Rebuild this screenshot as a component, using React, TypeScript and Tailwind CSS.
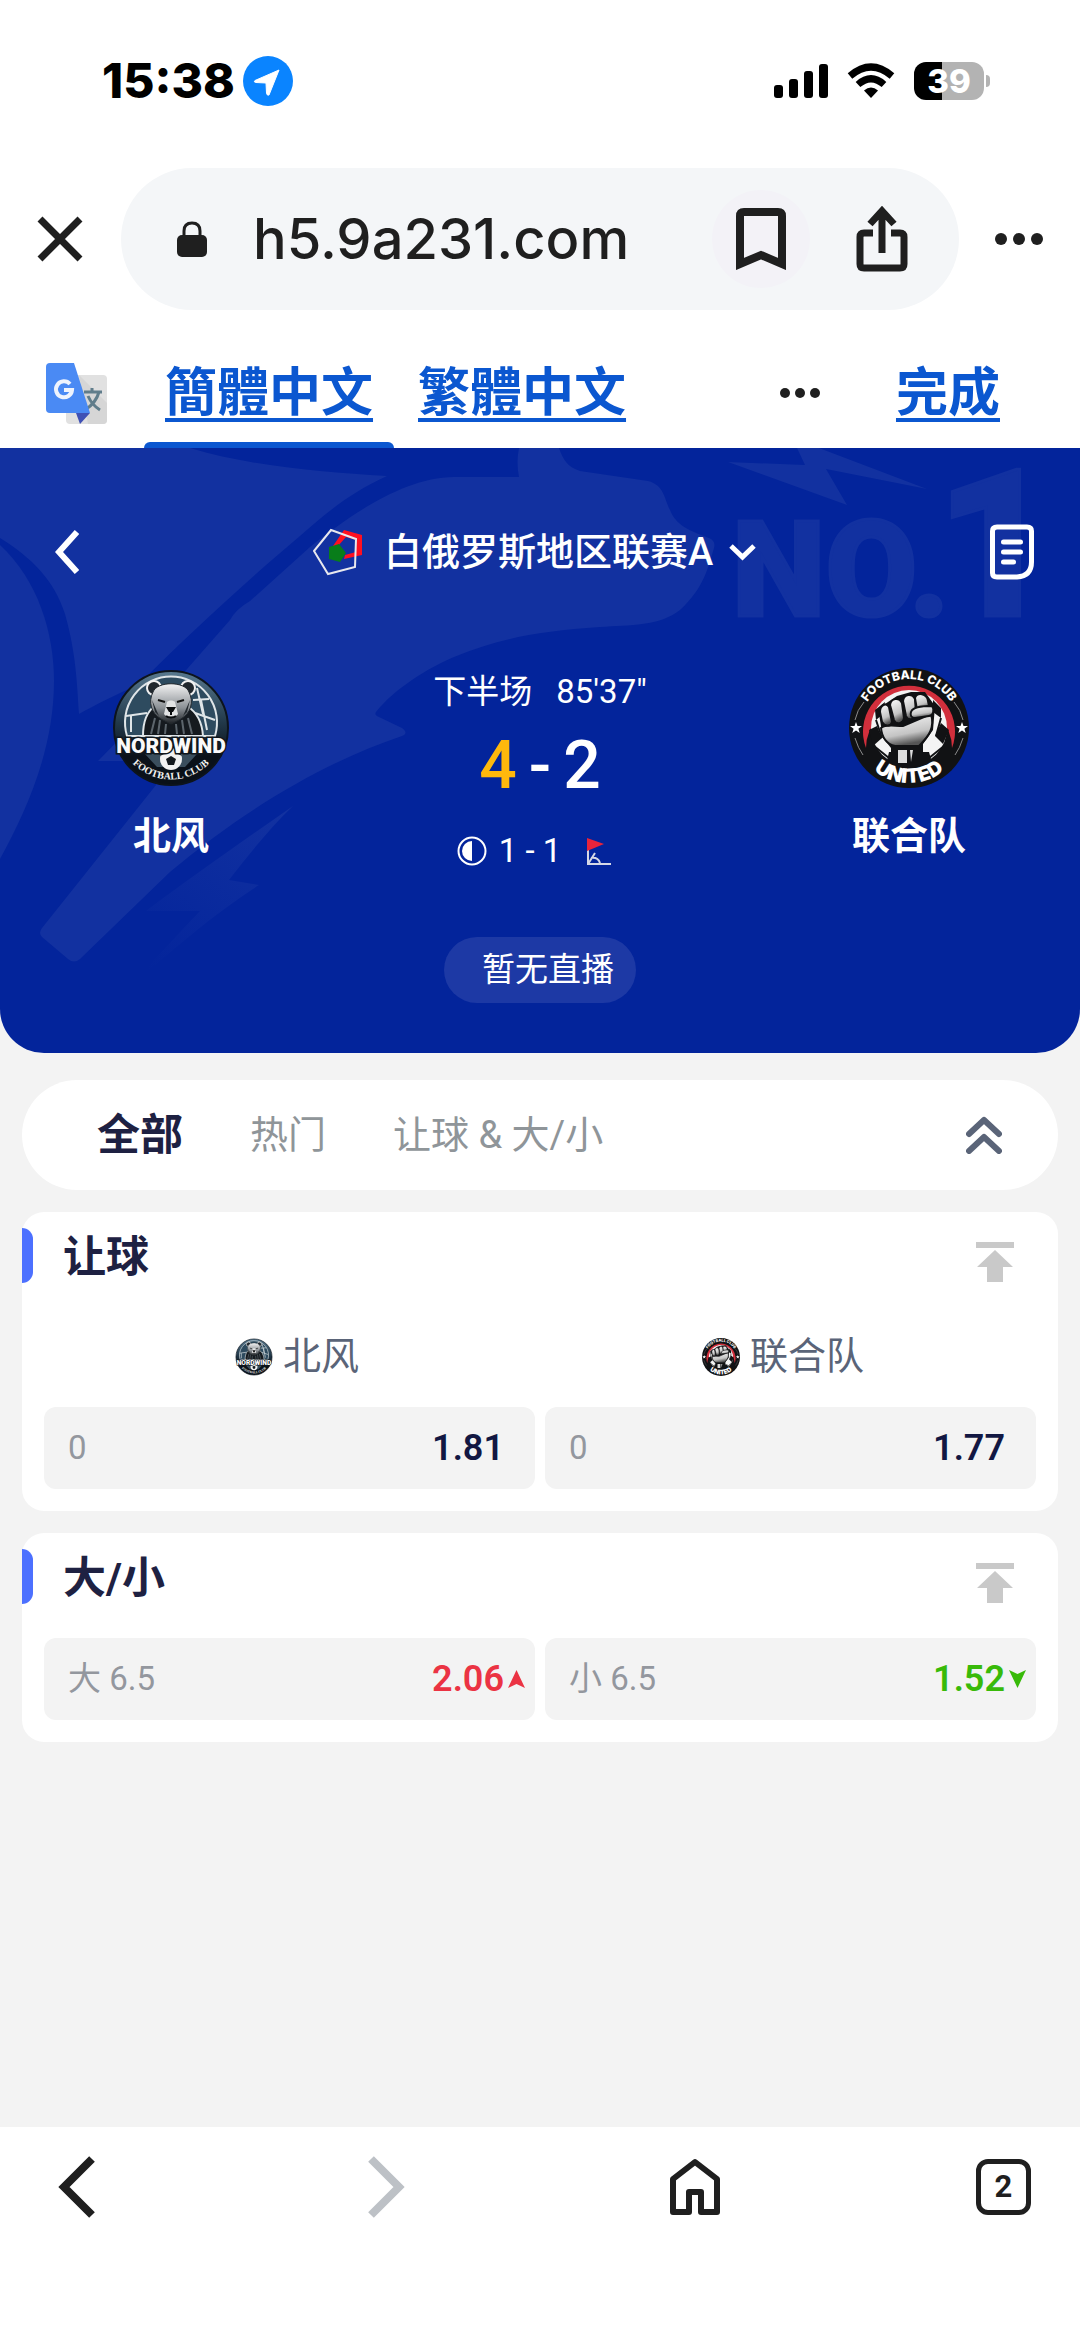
import { useId } from 'react'
import type { ReactNode } from 'react'

type Trend = 'up' | 'down'

interface Odd {
  label: string
  price: string
  trend?: Trend
}

interface BadgeProps {
  className?: string
}

const tabs = ['全部', '热门', '让球 & 大/小']

const handicap: Odd[] = [
  { label: '0', price: '1.81' },
  { label: '0', price: '1.77' },
]

const totals: Odd[] = [
  { label: '大 6.5', price: '2.06', trend: 'up' },
  { label: '小 6.5', price: '1.52', trend: 'down' },
]

function NordwindBadge({ className }: BadgeProps) {
  const id = useId()
  return (
    <svg viewBox="0 0 120 120" className={className} role="img" aria-label="Nordwind">
      <defs>
        <linearGradient id={`${id}-bg`} x1="0" y1="0" x2="0" y2="1">
          <stop offset="0" stopColor="#58798f" />
          <stop offset="0.45" stopColor="#22394a" />
          <stop offset="0.75" stopColor="#0a1119" />
        </linearGradient>
        <linearGradient id={`${id}-fur`} x1="0" y1="0" x2="0" y2="1">
          <stop offset="0" stopColor="#f4f4f4" />
          <stop offset="0.6" stopColor="#8b9095" />
          <stop offset="1" stopColor="#1c2024" />
        </linearGradient>
        <path id={`${id}-arc`} d="M8 72 A54 54 0 0 0 112 72" />
      </defs>
      <circle cx="60" cy="60" r="57" fill={`url(#${id}-bg)`} stroke="#0d141c" strokeWidth="2" />
      <path d="M16 68 A46 46 0 1 1 104 68 Z" fill="#2e4b5f" stroke="#dfe5e8" strokeWidth="2" />
      <g stroke="#dfe5e8" strokeWidth="2" fill="none">
        <path d="M15 48 L36 45 M20 48 V64 M82 32 L98 31 M84 45 L104 52 M90 32 L96 62 M86 20 L92 46" />
      </g>
      {/* bear */}
      <path d="M32 68 C32 50 38 42 44 38 H76 C84 43 91 52 92 68 Z" fill="#151a1f" stroke="#dfe5e8" strokeWidth="2" />
      <path d="M40 66 L44 50 M47 66 L49 52 M54 66 L55 56 M66 66 L65 56 M73 66 L71 52 M81 66 L77 50" stroke="#5c656c" strokeWidth="2" />
      <circle cx="43" cy="20" r="7" fill="#20272d" stroke="#f1f1f1" strokeWidth="2" />
      <circle cx="77" cy="20" r="7" fill="#20272d" stroke="#f1f1f1" strokeWidth="2" />
      <path d="M42 24 C46 13 74 13 78 24 C83 34 80 45 70 51 L60 56 L50 51 C40 45 37 34 42 24 Z" fill={`url(#${id}-fur)`} stroke="#23292e" />
      <path d="M41 32 L48 48 L44 44 Z M79 32 L72 48 L76 44 Z" fill="#23292e" />
      <path d="M47 32 L54 34 M73 32 L66 34" stroke="#111" strokeWidth="2" />
      <path d="M56 34 C58 32 62 32 64 34 L67 46 C65 50 55 50 53 46 Z" fill="#e2e3e4" />
      <path d="M55 39 H65 L62 44 H58 Z" fill="#0b0d0f" />
      <path d="M60 43 V47 M55 48 C57 50 63 50 65 48" stroke="#0b0d0f" strokeWidth="2" fill="none" />
      {/* ball */}
      <path d="M34 86 H86 L74 99 H46 Z" fill="#3a4e5d" />
      <circle cx="60" cy="91" r="11" fill="#f2f2f2" />
      <path d="M55 91 L60 88 L65 91 L63 97 H57 Z M49 88 L53 86 V82 M71 88 L67 86 V82" fill="#14191e" />
      <text
        x="60"
        y="85"
        textAnchor="middle"
        fontFamily="Roboto, sans-serif"
        fontWeight="900"
        fontSize="21"
        fill="#fafafa"
        stroke="#10161c"
        strokeWidth="3"
        paintOrder="stroke"
      >
        NORDWIND
      </text>
      <text fontFamily="'Liberation Serif', serif" fontWeight="700" fontSize="10" fill="#f1f1f1" textAnchor="middle">
        <textPath href={`#${id}-arc`} startOffset="50%">FOOTBALL CLUB</textPath>
      </text>
    </svg>
  )
}

function UnitedBadge({ className }: BadgeProps) {
  const id = useId()
  const star = 'M0 -6 L1.5 -2 L6 -2 L2.4 0.8 L3.7 5 L0 2.5 L-3.7 5 L-2.4 0.8 L-6 -2 L-1.5 -2 Z'
  return (
    <svg viewBox="0 0 120 120" className={className} role="img" aria-label="United">
      <defs>
        <path id={`${id}-top`} d="M11 60 A49 49 0 0 1 109 60" />
        <path id={`${id}-bottom`} d="M5 60 A55 55 0 0 0 115 60" />
        <linearGradient id={`${id}-hand`} x1="0" y1="0" x2="0.3" y2="1">
          <stop offset="0" stopColor="#ffffff" />
          <stop offset="0.7" stopColor="#c4c4c4" />
          <stop offset="1" stopColor="#555555" />
        </linearGradient>
      </defs>
      <circle cx="60" cy="60" r="60" fill="#111214" />
      <path d="M17 80 A46 46 0 1 1 103 80 A43 43 0 1 0 17 80 Z" fill="#d22f3c" />
      {/* ball behind the fist */}
      <circle cx="60" cy="60" r="38" fill="#f4f4f4" />
      <path d="M20 62 L28 58 L33 70 L24 78 Z M100 62 L92 55 L86 68 L94 76 Z M26 42 L36 34 L34 46 L27 52 Z M92 40 L84 32 L84 44 L92 50 Z M36 101 L40 84 H80 L84 98 L60 104 Z" fill="#111214" />
      <path d="M25 78 L40 90 M95 78 L80 90 M27 52 L33 70 M92 50 L87 68" stroke="#111214" strokeWidth="2" />
      <path d="M42 98 V80 L34 70 L30 46 L36 36 L48 28 L62 24 L76 24 L86 38 L84 62 L74 76 V98 Z" fill="#111214" />
      {/* fist */}
      <g fill={`url(#${id}-hand)`} stroke="#111214" strokeWidth="2">
        <path d="M32 60 C36 56 44 58 54 58 L82 46 C86 60 80 68 70 78 H46 C38 76 33 70 32 60 Z" />
        <path d="M31 44 C31 37 37 34 40 39 L43 54 C42 59 35 58 33 54 Z" />
        <path d="M41 37 C42 30 50 29 53 35 L55 50 C54 56 47 57 45 52 Z" />
        <path d="M54 33 C55 26 63 25 66 31 L67 46 C66 52 59 53 57 48 Z" />
        <path d="M66 30 C68 24 78 25 79 33 L80 38 L68 42 Z" />
        <path d="M62 44 C64 38 76 38 83 38 C86 42 84 48 80 48 L66 50 C62 50 61 47 62 44 Z" />
      </g>
      <path d="M49 82 H58 V95 H49 Z M61 82 H64 L62 94 Z" fill="#dcdcdc" />
      <path d="M15 34 Q8 42 6 52 M105 34 Q112 42 114 52 M6 70 Q9 80 14 87 M114 70 Q111 80 106 87" fill="none" stroke="#8b8b8b" />
      <path transform="translate(7 60)" d={star} fill="#fff" />
      <path transform="translate(113 60)" d={star} fill="#fff" />
      <text fontFamily="Inter, sans-serif" fontWeight="800" fontSize="12" fill="#fff" textAnchor="middle">
        <textPath href={`#${id}-top`} startOffset="50%">FOOTBALL CLUB</textPath>
      </text>
      <text fontFamily="Inter, sans-serif" fontWeight="900" fontSize="20" fill="#fff" textAnchor="middle">
        <textPath href={`#${id}-bottom`} startOffset="50%">UNITED</textPath>
      </text>
    </svg>
  )
}

function Dots({ className }: { className: string }) {
  return (
    <svg viewBox="0 0 48 12" className={className} fill="#1f1f1f">
      <circle cx="6" cy="6" r="6" />
      <circle cx="24" cy="6" r="6" />
      <circle cx="42" cy="6" r="6" />
    </svg>
  )
}

function StatusBar() {
  return (
    <div className="flex items-center justify-between h-[50px] mt-14 pl-[102px] pr-[90px]">
      <div className="flex items-center gap-2">
        <span className="text-[48px] leading-[50px] font-extrabold text-black">15:38</span>
        <svg viewBox="0 0 50 50" className="w-[50px] h-[50px]">
          <circle cx="25" cy="25" r="25" fill="#0a84ff" />
          <path d="M36 14 L26 39 Q24 40 23.500 37 L23 27 L13 26.500 Q10 26 12 24.500 Z" fill="#fff" stroke="#fff" strokeWidth="1" strokeLinejoin="round" />
        </svg>
      </div>
      <div className="flex items-center gap-[19px]">
        <svg viewBox="0 0 54 36" className="w-[54px] h-9" fill="#000">
          <rect x="0" y="22" width="9" height="13" rx="3" />
          <rect x="15" y="16" width="9" height="19" rx="3" />
          <rect x="30" y="8" width="9" height="27" rx="3" />
          <rect x="45" y="1" width="9" height="34" rx="3" />
        </svg>
        <svg viewBox="0 0 48 36" className="w-12 h-9" fill="none" stroke="#000" strokeWidth="7">
          <path d="M3 13 Q24 -5 45 13" />
          <path d="M11 21.500 Q24 10 37 21.500" />
          <path d="M17 27.500 Q24 21.500 31 27.500 L24 35 Z" fill="#000" stroke="none" />
        </svg>
        <div className="flex items-center gap-[2px]">
          <span className="w-[70px] h-[38px] rounded-xl bg-[linear-gradient(to_right,#000_40%,#b3b3b3_40%)] text-center text-[33px] leading-[38px] font-extrabold text-white">39</span>
          <span className="w-1 h-3 rounded-r-full bg-[#b3b3b3]" />
        </div>
      </div>
    </div>
  )
}

function AddressBar() {
  return (
    <div className="flex items-center mt-[62px] px-[37px]">
      <button aria-label="关闭">
        <svg viewBox="0 0 46 46" className="w-[46px] h-[46px]" stroke="#1f1f1f" strokeWidth="7">
          <path d="M3 3 L43 43 M43 3 L3 43" />
        </svg>
      </button>
      <div className="flex flex-1 items-center min-w-0 h-[142px] ml-[38px] mr-9 pl-14 pr-[51px] rounded-full bg-[#f4f6f8]">
        <svg viewBox="0 0 30 37" className="w-[30px] h-[37px] shrink-0">
          <path d="M7 17 V10 Q7 2 15 2 Q23 2 23 10 V17" fill="none" stroke="#1f1f1f" strokeWidth="3" />
          <rect x="0" y="14" width="30" height="22" rx="5" fill="#1f1f1f" />
        </svg>
        <input
          aria-label="网址"
          readOnly
          value="h5.9a231.com"
          className="flex-1 min-w-0 ml-[46px] bg-transparent text-[56px] leading-[72px] font-medium text-[#1f1f1f] outline-none"
        />
        <button aria-label="书签" className="flex items-center justify-center shrink-0 size-[98px] rounded-full bg-[#f3f2f7]">
          <svg viewBox="0 0 50 62" className="w-[50px] h-[62px]" fill="none" stroke="#1f1f1f" strokeWidth="8">
            <path d="M4 56 V8 Q4 4 8 4 H42 Q46 4 46 8 V56 L25 47 Z" />
          </svg>
        </button>
        <button aria-label="分享" className="shrink-0 ml-[46px]">
          <svg viewBox="0 0 52 68" className="w-[52px] h-[68px]" fill="none" stroke="#1f1f1f" strokeWidth="7">
            <path d="M17 28 H8 Q4 28 4 32 V59 Q4 63 8 63 H44 Q48 63 48 59 V32 Q48 28 44 28 H35" />
            <path d="M26 48 V8 M14 19 L26 6 L38 19" />
          </svg>
        </button>
      </div>
      <button aria-label="更多">
        <Dots className="w-12 h-3" />
      </button>
    </div>
  )
}

function TranslateBar() {
  const link = 'underline decoration-4 underline-offset-[7px]'
  return (
    <div className="flex items-start h-[138px] pl-[46px] pr-20 font-['Noto_Sans_CJK_TC',sans-serif] text-[52px] leading-[52px] font-bold text-[#0b57d0]">
      <svg viewBox="0 0 61 61" className="w-[61px] h-[61px] mt-[53px]">
        <rect x="20" y="12" width="41" height="49" rx="4" fill="#e1e1e1" />
        <path d="M33 12 L61 40 V57 Q61 61 57 61 H42 Z" fill="#d6d6d6" />
        <path d="M38 29 H56 M46 25 V29 M53 29 Q50 40 39 47 M42 33 Q46 42 54 47" stroke="#607d8b" strokeWidth="3" fill="none" />
        <path d="M30 50 H44 L34 61 Z" fill="#3f51b5" />
        <path d="M4 0 H28 L44 50 H4 Q0 50 0 46 V4 Q0 0 4 0 Z" fill="#4a8af4" />
        <path d="M24 21 A8 8 0 1 0 26 27 H18" stroke="#eef3fd" strokeWidth="4" fill="none" />
      </svg>
      <div className="flex gap-[3px] h-full ml-[37px]">
        <button className="relative flex items-start pt-[53px] px-[21px]">
          <span className={link}>簡體中文</span>
          <span className="absolute inset-x-0 bottom-0 h-[6px] rounded-t-md bg-[#0b57d0]" />
        </button>
        <button className="flex items-start pt-[53px] px-[21px]">
          <span className={link}>繁體中文</span>
        </button>
      </div>
      <button aria-label="翻译选项" className="mt-[78px] ml-auto">
        <Dots className="w-10 h-[10px]" />
      </button>
      <button className={`mt-[53px] ml-[76px] ${link}`}>完成</button>
    </div>
  )
}

function HeroBackdrop() {
  const id = useId()
  return (
    <svg viewBox="0 0 1080 605" preserveAspectRatio="xMidYMin slice" className="absolute inset-0 w-full h-full" fill="#1231a0" aria-hidden="true">
      <defs>
        <linearGradient id={id} x1="0.9" y1="0" x2="0.2" y2="1">
          <stop offset="0" stopColor="#1231a0" />
          <stop offset="1" stopColor="#1231a0" stopOpacity="0" />
        </linearGradient>
      </defs>
      <path d="M0 0 H190 C250 18 320 24 387 28 C350 45 330 62 300 88 C250 130 190 185 138 237 C115 247 97 256 79 266 C77 235 76 205 65 166 C54 132 32 110 0 90 Z" />
      <path d="M0 97 C38 132 54 185 54 233 C54 300 28 360 0 411 Z" />
      <path d="M519 0 H559 C563 12 568 19 580 23 L648 33 C664 37 664 50 670 62 C677 80 695 84 709 90 Q716 93 714 100 C708 120 704 140 680 162 C660 178 630 177 600 179 C540 183 500 190 454 209 C430 219 395 240 376 264 Q374 267 379 269 L402 280 Q409 285 402 288 C330 312 250 357 170 424 L80 511 Q74 516 68 511 L42 489 Q38 485 42 480 L156 337 L150 313 H98 L180 229 L230 172 Q236 161 250 153 L310 99 C350 67 405 29 454 29 H519 Q516 14 519 0 Z" />
      <path d="M293 358 C270 380 250 405 229 432 L259 437 C215 465 175 500 133 536 C155 510 178 486 200 463 H146 C190 430 240 395 293 358 Z" fill={`url(#${id})`} />
      <path d="M797 0 L805 17 L728 14 L847 57 L826 21 L927 41 L819 0 Z" />
      <text x="732" y="168" fontFamily="Roboto, sans-serif" fontWeight="900" fontSize="133" stroke="#1231a0" strokeWidth="3">
        NO.<tspan dx="-14" fontSize="206">1</tspan>
      </text>
    </svg>
  )
}

function Team({ name, badge }: { name: string, badge: ReactNode }) {
  return (
    <div className="flex flex-col items-center">
      {badge}
      <p className="mt-6 text-[38px] leading-[48px] font-bold">{name}</p>
    </div>
  )
}

function MatchHeader() {
  return (
    <section className="relative overflow-hidden rounded-b-[44px] bg-[#03249b] text-white">
      <HeroBackdrop />
      <div className="relative">
        <div className="flex items-center justify-between h-[134px] pt-[74px] pl-[55px] pr-[46px]">
          <button aria-label="返回">
            <svg viewBox="0 0 24 44" className="w-6 h-11" fill="none" stroke="#fff" strokeWidth="6">
              <path d="M22 2 L4 22 L22 42" />
            </svg>
          </button>
          <button className="flex items-center text-[38px] leading-[48px] font-medium">
            <svg viewBox="0 0 50 48" className="w-[50px] h-12 mr-[21px]">
              <path d="M20 18 L31 2 L49 7 V27 L31 31 L32 27 L43 24 V12 L33 9 L25 18 Z" fill="#ff1020" />
              <path d="M16 19 L26 16 L33 25 L27 34 L16 31 Z" fill="#087d1a" />
              <path d="M1 23 L18 2 L43 11 L42 39 L15 46 Z" fill="none" stroke="#e8e8ee" strokeWidth="2" />
            </svg>
            白俄罗斯地区联赛A
            <svg viewBox="0 0 27 18" className="w-[27px] h-[18px] ml-4" fill="none" stroke="#fff" strokeWidth="5">
              <path d="M2 3 L13.500 14 L25 3" />
            </svg>
          </button>
          <button aria-label="投注记录">
            <svg viewBox="0 0 44 56" className="w-11 h-14" fill="none" stroke="#fff" strokeWidth="5" strokeLinecap="round">
              <path d="M7 3 H37 Q41.500 3 41.500 7 V38 Q41.500 52 27 53 H7 Q2.500 53 2.500 49 V7 Q2.500 3 7 3 Z" />
              <path d="M13.500 18 H30.500 M13.500 28 H30.500 M13.500 38 H23.500" />
            </svg>
          </button>
        </div>

        <div className="grid grid-cols-[19fr_22fr_19fr] pt-[86px]">
          <Team name="北风" badge={<NordwindBadge className="size-[120px]" />} />
          <div className="flex flex-col items-center">
            <p className="flex gap-6 text-[33px] leading-[48px]">
              <span>下半场</span>
              <span>85'37"</span>
            </p>
            <p className="flex gap-3 mt-[14px] text-[66px] leading-[72px] font-medium">
              <span className="text-[#ffb80c]">4</span>
              <span>-</span>
              <span>2</span>
            </p>
            <div className="flex items-center mt-[25px] pr-3 text-[33px] leading-[48px]">
              <svg viewBox="0 0 30 30" className="w-[30px] h-[30px] mr-3">
                <circle cx="15" cy="15" r="13.500" fill="none" stroke="#fff" strokeWidth="2" />
                <path d="M15 5 A10 10 0 0 0 15 25 Z" fill="#fff" />
              </svg>
              <span>1 - 1</span>
              <svg viewBox="0 0 24 28" className="w-6 h-7 ml-[26px]" fill="none" stroke="#d5d8e6" strokeWidth="2">
                <path d="M1 12 V27 H24 M1 27 L8 16 M4 21 Q11 20 13 26" />
                <path d="M0 1 L17 7 L0 14 Z" fill="#e8243b" stroke="none" />
              </svg>
            </div>
          </div>
          <Team name="联合队" badge={<UnitedBadge className="size-[120px]" />} />
        </div>

        <div className="flex justify-center pt-[62px] pb-[50px]">
          <button className="h-[66px] pl-[38px] pr-[22px] rounded-full bg-[#1d39a5] text-[33px] leading-[66px]">暂无直播</button>
        </div>
      </div>
    </section>
  )
}

function OddButton({ label, price, trend }: Odd) {
  const color = trend === 'up' ? 'text-[#eb3343]' : trend === 'down' ? 'text-[#38ba09]' : 'text-[#121742]'
  return (
    <button className="flex items-center h-[82px] pl-6 pr-[10px] rounded-xl bg-[#f3f3f3]">
      <span className="text-[33px] text-[#93979e]">{label}</span>
      <span className={`ml-auto text-[36px] font-semibold ${color}`}>{price}</span>
      <span className={`w-[17px] ml-1 ${color}`}>
        {trend && (
          <svg viewBox="0 0 17 18" className="w-[17px] h-[18px]" fill="currentColor">
            <path d={trend === 'up' ? 'M8.500 0 L17 18 L8.500 14 L0 18 Z' : 'M8.500 18 L17 0 L8.500 4 L0 0 Z'} />
          </svg>
        )}
      </span>
    </button>
  )
}

function MarketCard({ title, odds, children }: { title: string, odds: Odd[], children?: ReactNode }) {
  return (
    <section className="pt-4 pb-[22px] rounded-[22px] bg-white">
      <div className="flex items-center h-[55px] pr-11">
        <span className="w-[11px] h-full rounded-r-[11px] bg-[#4c70ff]" />
        <h2 className="ml-[30px] pt-1 text-[43px] leading-[55px] font-bold text-[#1e2142]">{title}</h2>
        <button aria-label="置顶" className="ml-auto pt-3">
          <svg viewBox="0 0 38 40" className="w-[38px] h-10" fill="#c9c9c9">
            <path d="M0 0 H38 V6 H0 Z M19 8 L37 25 H27 V40 H11 V25 H1 Z" />
          </svg>
        </button>
      </div>
      <div className="pt-[34px]">
        {children}
        <div className="grid grid-cols-2 gap-[10px] px-[22px]">
          {odds.map((odd) => <OddButton key={odd.label + odd.price} {...odd} />)}
        </div>
      </div>
    </section>
  )
}

function BottomNav() {
  const item = 'flex items-center justify-center w-[55px]'
  return (
    <nav className="flex justify-between h-[214px] px-[49px] pb-[94px] bg-white">
      <button aria-label="后退" className={item}>
        <svg viewBox="0 0 38 64" className="w-[38px] h-16" fill="none" stroke="#1f1f1f" strokeWidth="8">
          <path d="M34 4 L6 32 L34 60" />
        </svg>
      </button>
      <button aria-label="前进" disabled className={item}>
        <svg viewBox="0 0 38 64" className="w-[38px] h-16" fill="none" stroke="#bdc1c6" strokeWidth="8">
          <path d="M4 4 L32 32 L4 60" />
        </svg>
      </button>
      <button aria-label="主页" className={item}>
        <svg viewBox="0 0 50 58" className="w-[50px] h-[58px]" fill="none" stroke="#1f1f1f" strokeWidth="6" strokeLinejoin="round">
          <path d="M3 21 L25 4 L47 21 V54 H31 V34 H19 V54 H3 Z" />
        </svg>
      </button>
      <button className={item}>
        <span className="w-[55px] h-14 rounded-xl border-[5px] border-[#1f1f1f] text-center text-[31px] leading-[46px] font-bold text-[#1f1f1f]">2</span>
      </button>
    </nav>
  )
}

export default function App() {
  return (
    <div className="flex flex-col min-h-screen bg-[#f3f3f3] font-['Roboto','Noto_Sans_CJK_SC',sans-serif]">
      <header className="flex flex-col bg-white font-['Inter','Noto_Sans_CJK_SC',sans-serif]">
        <StatusBar />
        <AddressBar />
        <TranslateBar />
      </header>

      <MatchHeader />

      <main className="flex flex-1 flex-col gap-[22px] px-[22px] pt-[27px]">
        <div className="flex items-center h-[110px] pl-[75px] pr-14 rounded-full bg-white">
          <div className="flex items-center gap-[67px]">
            {tabs.map((tab, i) => (
              <button
                key={tab}
                className={i === 0 ? 'text-[43px] font-bold text-[#1e2142]' : 'text-[38px] text-[#8f9599]'}
              >
                {tab}
              </button>
            ))}
          </div>
          <button aria-label="收起" className="ml-auto">
            <svg viewBox="0 0 36 38" className="w-9 h-[38px]" fill="none" stroke="#5a6478" strokeWidth="6" strokeLinecap="round" strokeLinejoin="round">
              <path d="M3 18 L18 4 L33 18 M3 35 L18 21 L33 35" />
            </svg>
          </button>
        </div>

        <MarketCard title="让球" odds={handicap}>
          <div className="grid grid-cols-2 h-[90px] px-8 pb-[11px] text-[38px] text-[#5a6478]">
            <div className="flex items-center justify-center gap-[10px]">
              <NordwindBadge className="size-[38px]" />
              北风
            </div>
            <div className="flex items-center justify-center gap-[10px]">
              <UnitedBadge className="size-[38px]" />
              联合队
            </div>
          </div>
        </MarketCard>
        <MarketCard title="大/小" odds={totals} />
      </main>

      <BottomNav />
    </div>
  )
}
